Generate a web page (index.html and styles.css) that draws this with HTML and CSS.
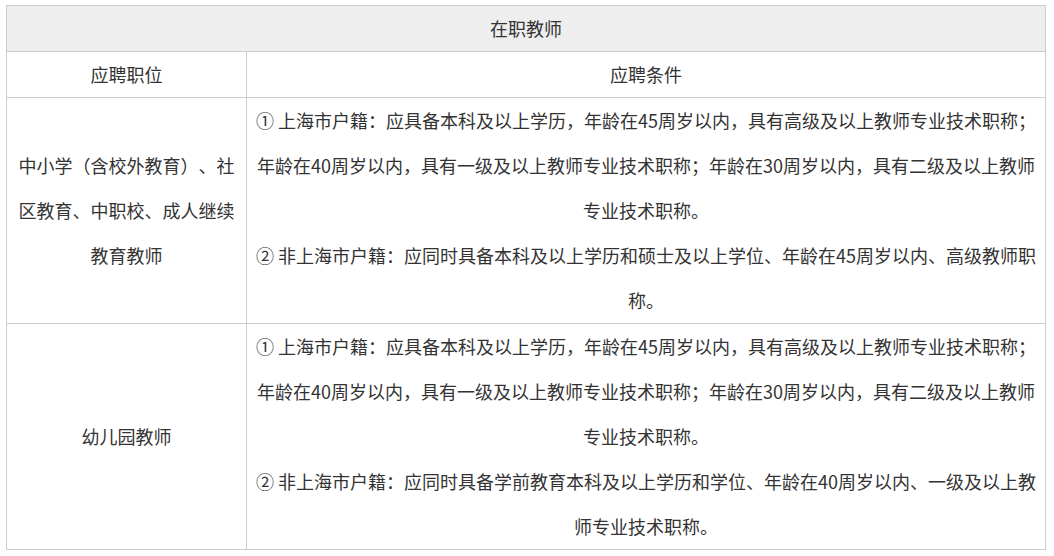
FILE: index.html
```html
<!DOCTYPE html>
<html lang="zh-CN">
<head>
<meta charset="utf-8">
<title>在职教师</title>
<link rel="stylesheet" href="styles.css">
</head>
<body>
<div class="wrap">
<table class="jobs">
  <colgroup>
    <col class="c1">
    <col class="c2">
  </colgroup>
  <tr class="head"><td colspan="2">在职教师</td></tr>
  <tr><td>应聘职位</td><td>应聘条件</td></tr>
  <tr>
    <td>中小学（含校外教育）、社区教育、中职校、成人继续教育教师</td>
    <td>① 上海市户籍：应具备本科及以上学历，年龄在45周岁以内，具有高级及以上教师专业技术职称；年龄在40周岁以内，具有一级及以上教师专业技术职称；年龄在30周岁以内，具有二级及以上教师专业技术职称。<br>② 非上海市户籍：应同时具备本科及以上学历和硕士及以上学位、年龄在45周岁以内、高级教师职称。</td>
  </tr>
  <tr>
    <td>幼儿园教师</td>
    <td>① 上海市户籍：应具备本科及以上学历，年龄在45周岁以内，具有高级及以上教师专业技术职称；年龄在40周岁以内，具有一级及以上教师专业技术职称；年龄在30周岁以内，具有二级及以上教师专业技术职称。<br>② 非上海市户籍：应同时具备学前教育本科及以上学历和学位、年龄在40周岁以内、一级及以上教师专业技术职称。</td>
  </tr>
</table>
</div>
</body>
</html>
```
FILE: styles.css
```css
html, body {
  margin: 0;
  padding: 0;
  background: #fff;
}
.wrap {
  padding: 5px 0 0 6px;
}
.jobs {
  border-collapse: collapse;
  width: 1040px;
  table-layout: fixed;
  font-family: "Noto Sans CJK SC", "Microsoft YaHei", sans-serif;
  font-size: 18px;
  color: #333;
  text-spacing-trim: space-all;
}
.c1 { width: 240px; }
.jobs td {
  border: 1px solid #ccc;
  padding: 0 8px;
  line-height: 45px;
  text-align: center;
  vertical-align: middle;
}
.head td {
  background: #eee;
}
```
